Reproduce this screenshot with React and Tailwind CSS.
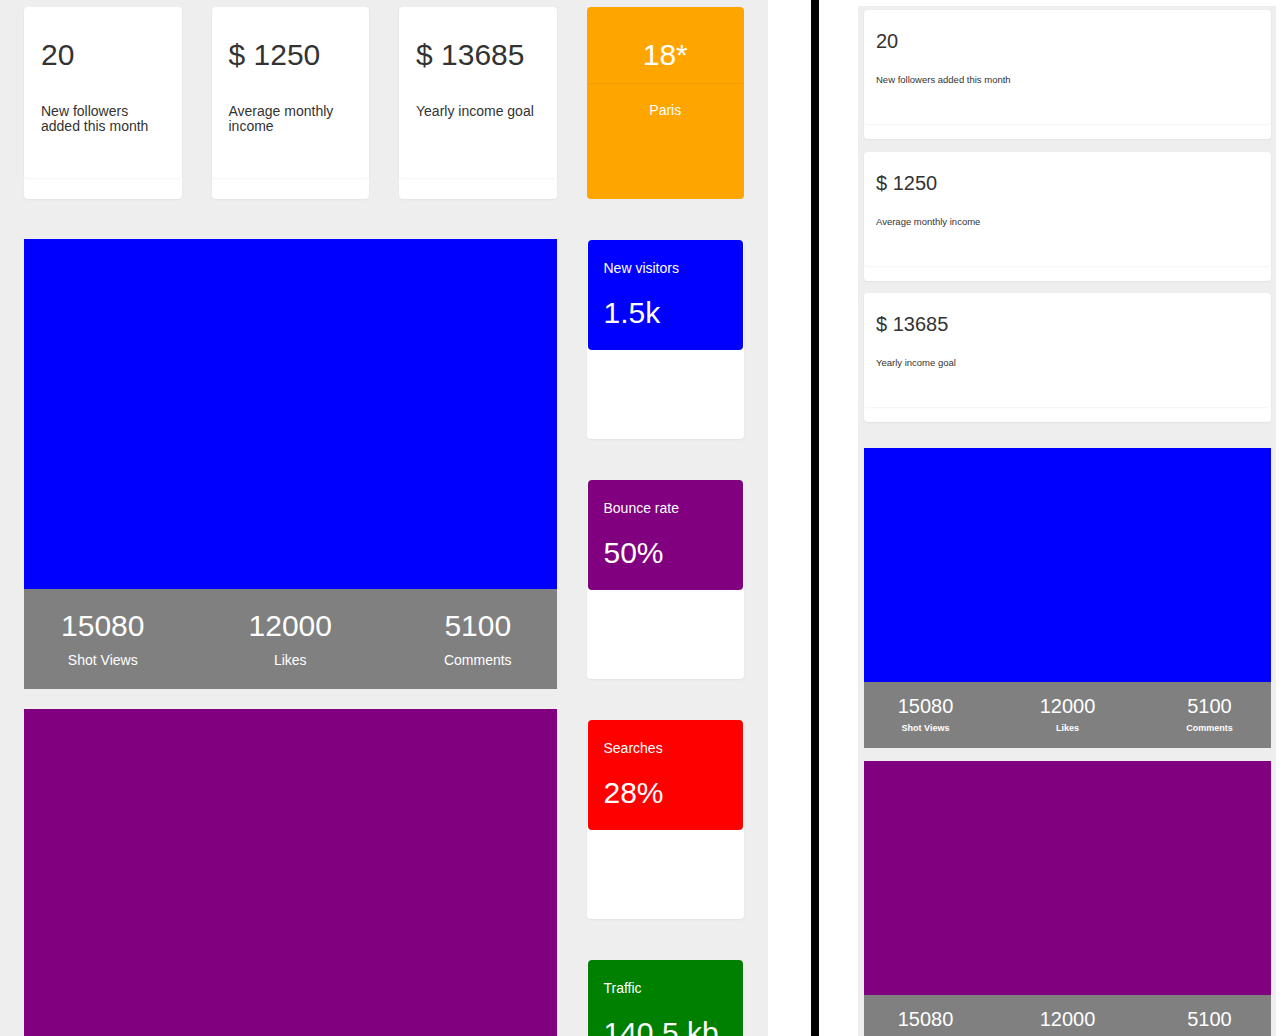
import React from "react";

function StatCard({ value, label }) {
  return (
    <div className="h-[192px] rounded-[4px] bg-white shadow-[0_1px_2px_rgba(0,0,0,0.05)]">
      <div className="h-[171px] rounded-[4px] pl-[17px] pr-4 pt-[33px] shadow-[0_1px_2px_rgba(0,0,0,0.05)]">
        <div className="text-[30px] leading-[30px] text-[#333333]">{value}</div>
        <div className="mt-[34px] text-[14px] leading-[15px] text-[#333333]">{label}</div>
      </div>
    </div>
  );
}

function OrangeCard() {
  return (
    <div className="h-[192px] rounded-[4px] bg-[#ffa500] text-white">
      <div className="h-[76px] pt-[33px] text-center text-[30px] leading-[30px] shadow-[0_1px_1px_rgba(0,0,0,0.04)]">
        18*
      </div>
      <div className="pt-[17px] text-center text-[14px] leading-[20px]">Paris</div>
    </div>
  );
}

function StatsBar({ big }) {
  const items = [
    ["15080", "Shot Views"],
    ["12000", "Likes"],
    ["5100", "Comments"],
  ];
  if (big) {
    return (
      <div className="h-[100px] overflow-hidden bg-[#808080] text-white">
        <div className="mx-[-15px] grid grid-cols-3">
          {items.map(([n, l]) => (
            <div key={l} className="pt-[22px] text-center">
              <div className="text-[30px] leading-[30px]">{n}</div>
              <div className="mt-[12px] text-[14px] leading-[14px]">{l}</div>
            </div>
          ))}
        </div>
      </div>
    );
  }
  return (
    <div className="h-[66px] overflow-hidden bg-[#808080] text-white">
      <div className="mx-[-9.5px] grid grid-cols-3">
        {items.map(([n, l]) => (
          <div key={l} className="pt-[14px] text-center">
            <div className="text-[20px] leading-[20px]">{n}</div>
            <div className="mt-[8px] text-[9px] font-bold leading-[9px]">{l}</div>
          </div>
        ))}
      </div>
    </div>
  );
}

function MiniCard({ title, value, color }) {
  return (
    <div className="h-[199px] shrink-0 rounded-[4px] bg-white shadow-[0_1px_2px_rgba(0,0,0,0.05)]">
      <div className={`mx-px h-[110px] rounded-[4px] px-4 pt-[18px] text-white ${color}`}>
        <div className="text-[14px] leading-[20px]">{title}</div>
        <div className="mt-[20px] text-[30px] leading-[30px] whitespace-nowrap">{value}</div>
      </div>
    </div>
  );
}

function SmallCard({ value, label }) {
  return (
    <div className="h-[129px] shrink-0 rounded-[4px] bg-white shadow-[0_1px_2px_rgba(0,0,0,0.05)]">
      <div className="h-[114px] rounded-[4px] px-3 pt-[21px] shadow-[0_1px_2px_rgba(0,0,0,0.05)]">
        <div className="text-[20px] leading-[20px] text-[#333333]">{value}</div>
        <div className="mt-[24px] text-[9.5px] leading-[10px] text-[#333333]">{label}</div>
      </div>
    </div>
  );
}

export default function App() {
  return (
    <div className="flex h-[1036px] w-[1284px] overflow-hidden bg-white font-['Liberation_Sans',Arial,sans-serif]">
      {/* Left panel */}
      <div className="h-full w-[768px] shrink-0 overflow-hidden bg-[#eeeeee] px-[24px] pt-[7px]">
        <div className="grid grid-cols-4 gap-x-[30px]">
          <StatCard value="20" label="New followers added this month" />
          <StatCard value="$ 1250" label="Average monthly income" />
          <StatCard value="$ 13685" label="Yearly income goal" />
          <OrangeCard />
        </div>
        <div className="mt-[40px] grid grid-cols-4 gap-x-[30px]">
          <div className="col-span-3 flex flex-col gap-[20px]">
            <div>
              <div className="h-[350px] bg-[#0000ff]" />
              <StatsBar big />
            </div>
            <div>
              <div className="h-[350px] bg-[#800080]" />
            </div>
          </div>
          <div className="flex flex-col gap-[41px] pt-px">
            <MiniCard title="New visitors" value="1.5k" color="bg-[#0000ff]" />
            <MiniCard title="Bounce rate" value="50%" color="bg-[#800080]" />
            <MiniCard title="Searches" value="28%" color="bg-[#ff0000]" />
            <MiniCard title="Traffic" value="140.5 kb" color="bg-[#008000]" />
          </div>
        </div>
      </div>

      {/* Divider */}
      <div className="h-full w-[43px] shrink-0 bg-white" />
      <div className="h-full w-[8px] shrink-0 bg-black" />
      <div className="h-full w-[39px] shrink-0 bg-white" />

      {/* Right panel */}
      <div className="mt-[6px] h-[1030px] w-[418px] shrink-0 overflow-hidden bg-[#eeeeee] pl-[6px] pr-[5px] pt-[4px]">
        <div className="flex flex-col gap-[12.5px]">
          <SmallCard value="20" label="New followers added this month" />
          <SmallCard value="$ 1250" label="Average monthly income" />
          <SmallCard value="$ 13685" label="Yearly income goal" />
        </div>
        <div className="mt-[26px] flex flex-col gap-[13px]">
          <div>
            <div className="h-[234px] bg-[#0000ff]" />
            <StatsBar />
          </div>
          <div>
            <div className="h-[234px] bg-[#800080]" />
            <StatsBar />
          </div>
        </div>
      </div>
      <div className="h-full flex-1 bg-white" />
    </div>
  );
}
